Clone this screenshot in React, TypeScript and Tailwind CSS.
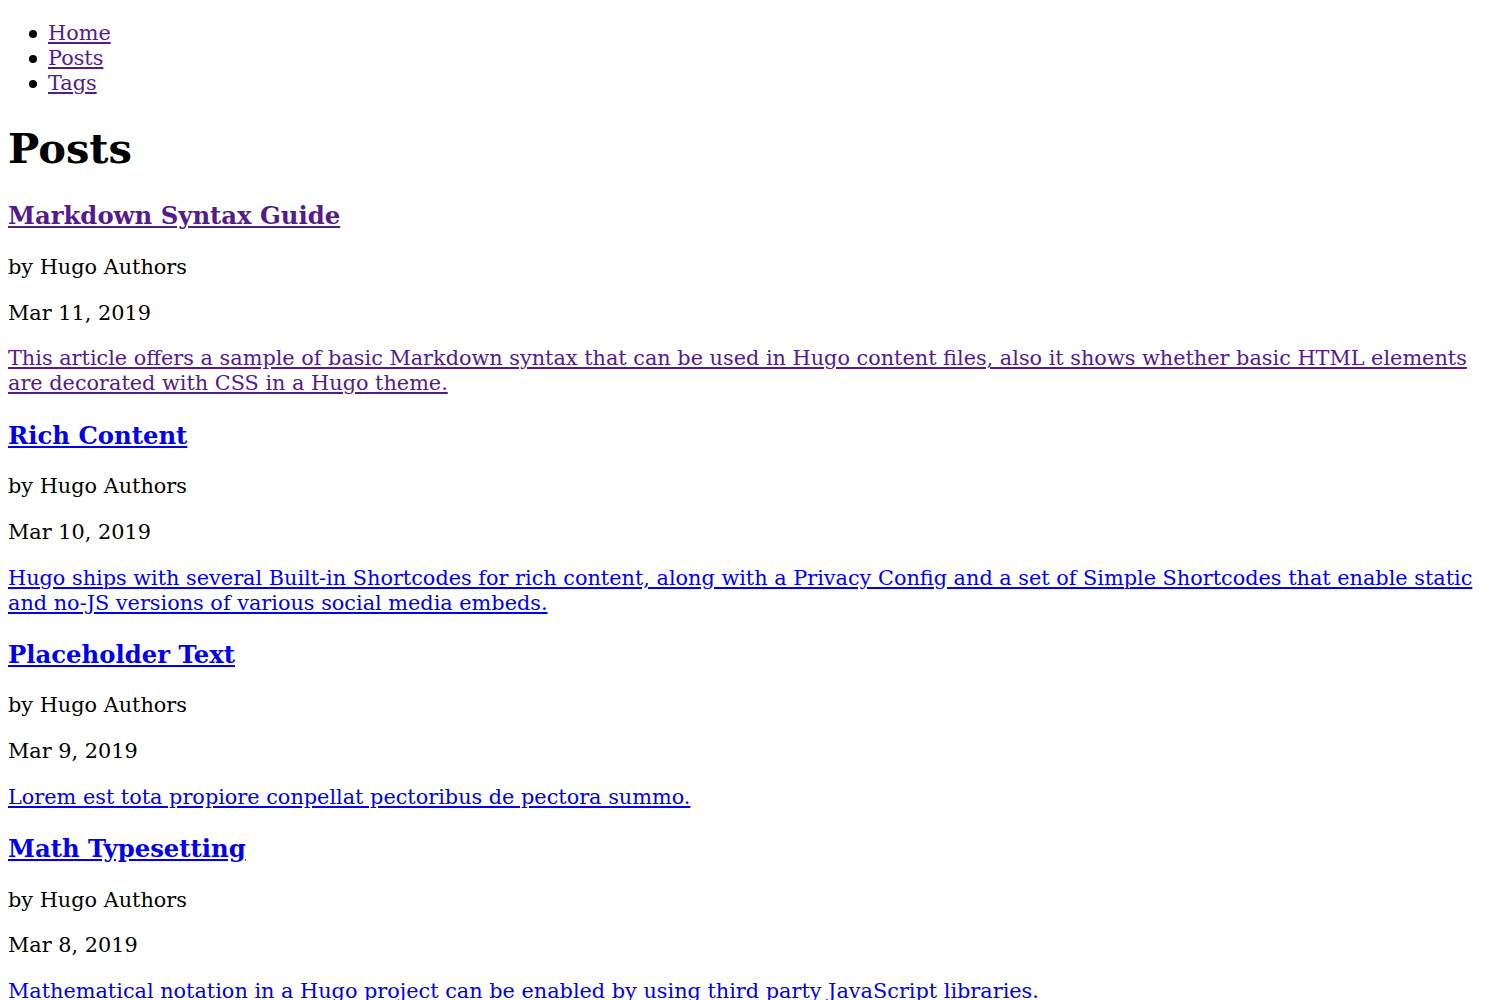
const posts = [
  {
    title: "Markdown Syntax Guide",
    date: "Mar 11, 2019",
    summary:
      "This article offers a sample of basic Markdown syntax that can be used in Hugo content files, also it shows whether basic HTML elements are decorated with CSS in a Hugo theme.",
    visited: true,
  },
  {
    title: "Rich Content",
    date: "Mar 10, 2019",
    summary:
      "Hugo ships with several Built-in Shortcodes for rich content, along with a Privacy Config and a set of Simple Shortcodes that enable static and no-JS versions of various social media embeds.",
    visited: false,
  },
  {
    title: "Placeholder Text",
    date: "Mar 9, 2019",
    summary: "Lorem est tota propiore conpellat pectoribus de pectora summo.",
    visited: false,
  },
  {
    title: "Math Typesetting",
    date: "Mar 8, 2019",
    summary:
      "Mathematical notation in a Hugo project can be enabled by using third party JavaScript libraries.",
    visited: false,
  },
];

const nav = ["Home", "Posts", "Tags"];

function linkClass(visited: boolean) {
  return visited ? "underline text-[#551a8b]" : "underline text-[#0000ee]";
}

export default function App() {
  return (
    <div className="bg-white min-h-screen flow-root">
      <div className="m-[8px] text-black text-[20.8px] leading-[1.2] font-['DejaVu_Serif',serif]">
        <ul className="list-none pl-[40px] my-[1em]">
          {nav.map((item) => (
            <li key={item} className="relative">
              {/* bullet */}
              <span className="absolute left-[-19px] top-[9px] w-[8px] h-[8px] rounded-full bg-black" />
              <a href="#" className={linkClass(true)}>
                {item}
              </a>
            </li>
          ))}
        </ul>
        <h1 className="text-[2em] font-bold my-[0.67em]">Posts</h1>
        {posts.map((post) => (
          <div key={post.title}>
            <h3 className="text-[1.17em] font-bold my-[1em]">
              <a href="#" className={linkClass(post.visited)}>
                {post.title}
              </a>
            </h3>
            <p className="my-[1em]">by Hugo Authors</p>
            <p className="my-[1em]">{post.date}</p>
            <p className="my-[1em]">
              <a href="#" className={linkClass(post.visited)}>
                {post.summary}
              </a>
            </p>
          </div>
        ))}
      </div>
    </div>
  );
}
